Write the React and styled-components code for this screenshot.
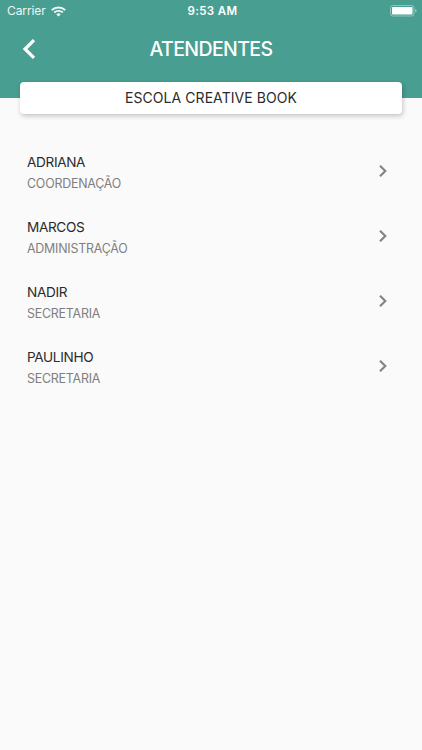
import styled, { createGlobalStyle } from "styled-components"

const GlobalStyle = createGlobalStyle`
    :root{
        --teal: #489e90;
        --background: #fafafa;
        --text: #2b2b2b;
        --text-secondary: #7f7f7f;
    }
    *{
        box-sizing: border-box;
    }
    body{
        margin: 0;
        background-color: var(--background);
        font-family: Inter, "Liberation Sans", sans-serif;
    }
`

const Screen = styled.div`
    min-height: 750px;
    background-color: var(--background);
`

const Header = styled.header`
    height: 98px;
    background-color: var(--teal);
    color: #fff;
`

const StatusBar = styled.div`
    display: grid;
    grid-template-columns: 1fr auto 1fr;
    align-items: center;
    height: 22px;
    padding: 0 5px 0 7px;
    font-size: 12px;
    line-height: 22px;
    .carrier{
        display: flex;
        align-items: center;
        gap: 5px;
        letter-spacing: -0.1px;
        opacity: .92;
    }
    .time{
        padding-left: 1px;
        font-size: 11.5px;
        font-weight: 600;
        letter-spacing: 0.4px;
    }
    .battery{
        justify-self: end;
    }
    svg{
        display: block;
    }
`

const NavBar = styled.div`
    display: grid;
    grid-template-columns: 60px 1fr 60px;
    align-items: center;
    height: 54px;
    svg{
        display: block;
        margin-left: 22px;
    }
`

const Title = styled.h1`
    margin: 0;
    font-size: 19.5px;
    font-weight: 500;
    letter-spacing: -0.6px;
    text-align: center;
`

const School = styled.div`
    height: 32px;
    margin: -16px 20px 0;
    border-radius: 4px;
    background-color: #fff;
    box-shadow: 1px 2px 5px rgba(0, 0, 0, .22);
    color: var(--text);
    font-size: 14px;
    line-height: 32px;
    letter-spacing: 0.06px;
    text-align: center;
`

const List = styled.ul`
    margin: 0;
    padding: 24px 0 0;
    list-style: none;
`

const Row = styled.li`
    display: flex;
    align-items: center;
    justify-content: space-between;
    height: 65.2px;
    padding: 0 34px 0 27px;
    .text{
        padding-top: 4px;
    }
    .name{
        color: var(--text);
        font-size: 13.6px;
        line-height: 21px;
        letter-spacing: -0.35px;
    }
    .role{
        color: var(--text-secondary);
        font-size: 12.4px;
        line-height: 21px;
        letter-spacing: -0.2px;
    }
`

const attendants = [
    { name: "ADRIANA", role: "COORDENAÇÃO" },
    { name: "MARCOS", role: "ADMINISTRAÇÃO" },
    { name: "NADIR", role: "SECRETARIA" },
    { name: "PAULINHO", role: "SECRETARIA" },
]

function Wifi() {
    return (
        <svg width="15" height="11" viewBox="0 0 14 11" fill="none" stroke="#fff" strokeWidth="1.9" preserveAspectRatio="none">
            <path d="M.7 4.1a9 9 0 0 1 12.6 0" />
            <path d="M3 6.5a5.7 5.7 0 0 1 8 0" />
            <path d="M7 10.5 4.9 8.4a3 3 0 0 1 4.2 0Z" fill="#fff" stroke="none" />
        </svg>
    )
}

function Battery() {
    return (
        <svg width="27" height="12" viewBox="0 0 27 12">
            <rect x=".5" y=".5" width="23.5" height="10.5" rx="2.2" fill="none" stroke="#fff" strokeOpacity=".4" />
            <rect x="2" y="2" width="20.5" height="7.5" rx=".8" fill="#fff" />
            <path d="M25.2 4v3.6q1.5-.6 1.5-1.8T25.2 4Z" fill="#fff" fillOpacity=".45" />
        </svg>
    )
}

function App() {
    return (
        <Screen>
            <GlobalStyle />
            <Header>
                <StatusBar>
                    <span className="carrier">Carrier <Wifi /></span>
                    <span className="time">9:53 AM</span>
                    <span className="battery"><Battery /></span>
                </StatusBar>
                <NavBar>
                    <svg width="14" height="22" viewBox="0 0 14 22" fill="none" stroke="#fff" strokeWidth="3.2">
                        <path d="M12 2.1 3 11l9 8.9" />
                    </svg>
                    <Title>ATENDENTES</Title>
                </NavBar>
            </Header>
            <School>ESCOLA CREATIVE BOOK</School>
            <List>
                {attendants.map(({ name, role }) => (
                    <Row key={name}>
                        <div className="text">
                            <div className="name">{name}</div>
                            <div className="role">{role}</div>
                        </div>
                        <svg width="10" height="14" viewBox="0 0 10 14" fill="none" stroke="#858585" strokeWidth="2.2">
                            <path d="m2 1.7 5.3 5.3L2 12.3" />
                        </svg>
                    </Row>
                ))}
            </List>
        </Screen>
    )
}

export default App
